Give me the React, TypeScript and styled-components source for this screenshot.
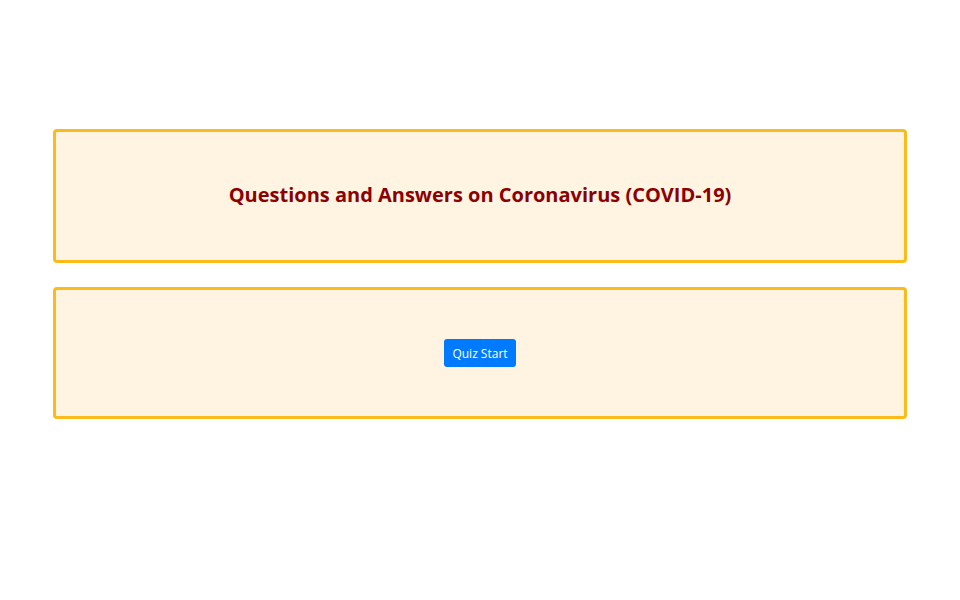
import React, { useState } from "react";
import styled, { createGlobalStyle } from "styled-components";

const GlobalStyle = createGlobalStyle`
  body {
    margin: 0;
    background: #fff;
    font-family: "Open Sans", "Noto Sans", sans-serif;
  }
`;

const Page = styled.div`
  display: flex;
  flex-direction: column;
  gap: 24px;
  padding: 129px 53px 0;
`;

const Card = styled.div<{ $height: number; $lift?: number }>`
  height: ${(p) => p.$height}px;
  box-sizing: border-box;
  padding-bottom: ${(p) => p.$lift ?? 0}px;
  display: flex;
  align-items: center;
  justify-content: center;
  background: #fff4e1;
  border: 3px solid #fbbc1b;
  border-radius: 4px;
`;

const Title = styled.h1`
  margin: 0;
  color: #8b0000;
  font-size: 20px;
  font-weight: 700;
`;

const StartButton = styled.button`
  height: 28px;
  padding: 0 8px;
  border: none;
  border-radius: 3px;
  background: #007bff;
  color: #fff;
  font-family: "Open Sans", "Noto Sans", sans-serif;
  font-size: 12px;
  cursor: pointer;

  &:hover {
    background: #0069d9;
  }
`;

const App: React.FC = () => {
  const [started, setStarted] = useState(false);

  return (
    <>
      <GlobalStyle />
      <Page>
        <Card $height={134} $lift={4}>
          <Title>Questions and Answers on Coronavirus (COVID-19)</Title>
        </Card>
        <Card $height={132}>
          <StartButton onClick={() => setStarted(!started)}>Quiz Start</StartButton>
        </Card>
      </Page>
    </>
  );
};

export default App;
